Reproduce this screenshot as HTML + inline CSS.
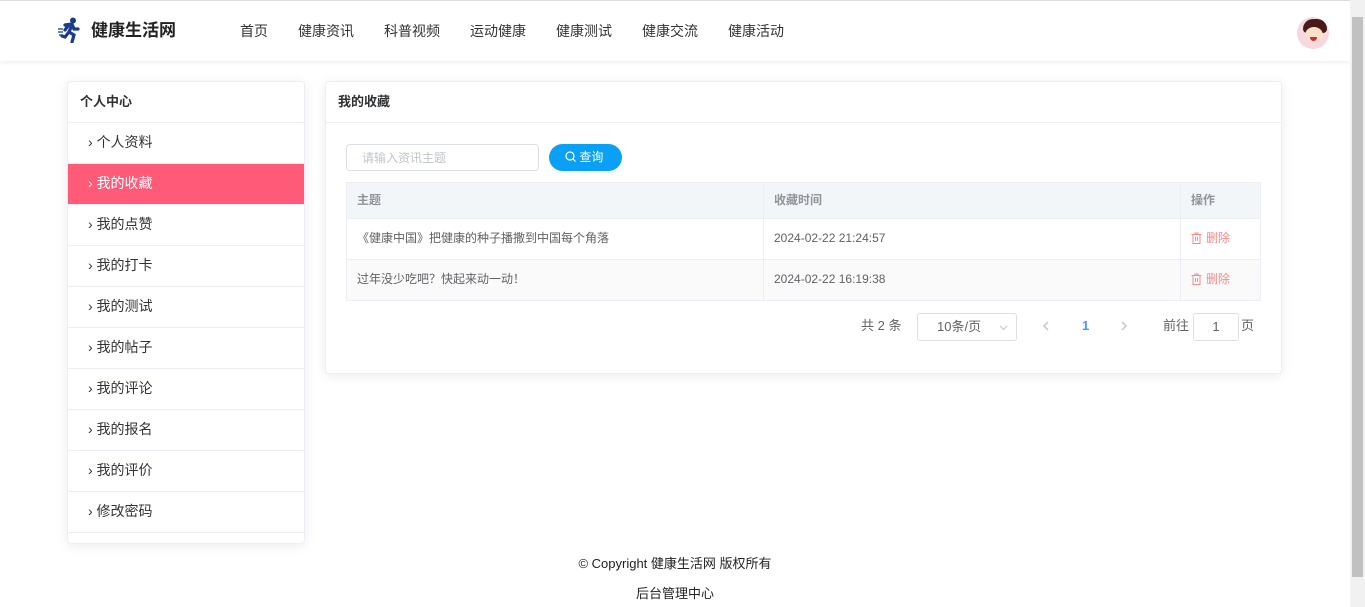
<!DOCTYPE html>
<html><head><meta charset="utf-8"><style>
*{margin:0;padding:0;box-sizing:border-box}
body{width:1365px;height:607px;overflow:hidden;background:#fff;font-family:"Liberation Sans","Noto Sans CJK SC",sans-serif;position:relative;color:#303133}
.hdr{position:absolute;left:0;top:0;width:1350px;height:61px;border-top:1px solid #ddd;box-shadow:0 2px 4px rgba(0,0,0,.06);background:#fff}
.logo{position:absolute;left:58px;top:16px}
.brand{position:absolute;left:91px;top:20px;font-size:17px;line-height:20px;font-weight:bold;color:#222}
.nav{position:absolute;top:21px;font-size:14px;line-height:18px;color:#333}
.av{position:absolute;left:1297px;top:16px;width:32px;height:32px;border-radius:50%;background:#f6d8e0;overflow:hidden}
.sb{position:absolute;left:1350px;top:0;width:15px;height:607px;background:#f1f1f1}
.sb i{position:absolute;left:2px;top:17px;width:11px;height:560px;background:#c1c1c1}
.card{position:absolute;background:#fff;border:1px solid #ebeef5;border-radius:4px;box-shadow:0 2px 12px rgba(0,0,0,.08)}
.ch{height:41px;border-bottom:1px solid #ebeef5;font-size:13px;line-height:18px;font-weight:bold;padding:11px 12px;color:#303133}
.it{height:41px;border-bottom:1px solid #ebeef5;font-size:14px;line-height:18px;padding:10px 20px;color:#333}
.it.a{background:#ff5a78;color:#fff}
td,th{border-bottom:1px solid #ebeef5;border-right:1px solid #ebeef5;font-size:12px;line-height:16px;text-align:left;padding:0 10px;color:#606266}
th{background:#f3f6f9;height:36px;color:#909399;padding-bottom:2px}
td{height:41px;padding-bottom:2px}
table{border-collapse:collapse;position:absolute;left:20px;top:100px;width:915px;border-left:1px solid #ebeef5;border-top:1px solid #ebeef5}
.del{color:#f78989}
.tr{vertical-align:-2px;margin-right:4px}
</style></head><body>
<div class="hdr">
<svg class="logo" width="22" height="26" viewBox="0 0 22 26"><circle cx="15" cy="3.5" r="3" fill="#1a3a8c"/><path d="M7 8 L14 7 L16 12 L20 12 M14 8 L11 15 L16 18 L14 25 M11 15 L7 20 L4 19 M10 9 L7 13" stroke="#1a3a8c" stroke-width="3.2" fill="none" stroke-linecap="round"/><path d="M0 12h5M0 15h5M1 18h4" stroke="#1a3a8c" stroke-width="1.2"/></svg>
<div class="brand">健康生活网</div>
<div class="nav" style="left:240px">首页</div>
<div class="nav" style="left:298px">健康资讯</div>
<div class="nav" style="left:384px">科普视频</div>
<div class="nav" style="left:470px">运动健康</div>
<div class="nav" style="left:556px">健康测试</div>
<div class="nav" style="left:642px">健康交流</div>
<div class="nav" style="left:728px">健康活动</div>
<div class="av"><div style="position:absolute;left:6px;top:2px;width:24px;height:14px;background:#4a1a1a;border-radius:10px 10px 4px 4px"></div><div style="position:absolute;left:8px;top:10px;width:18px;height:16px;background:#fde0c8;border-radius:50%"></div><div style="position:absolute;left:13px;top:20px;width:7px;height:4px;background:#c0304a;border-radius:0 0 4px 4px"></div></div>
</div>
<div class="sb"><i></i></div>

<div class="card" style="left:67px;top:81px;width:238px;height:463px">
<div class="ch">个人中心</div>
<div class="it">› 个人资料</div>
<div class="it a">› 我的收藏</div>
<div class="it">› 我的点赞</div>
<div class="it">› 我的打卡</div>
<div class="it">› 我的测试</div>
<div class="it">› 我的帖子</div>
<div class="it">› 我的评论</div>
<div class="it">› 我的报名</div>
<div class="it">› 我的评价</div>
<div class="it">› 修改密码</div>
</div>

<div class="card" style="left:325px;top:81px;width:957px;height:293px">
<div class="ch">我的收藏</div>
<div style="position:absolute;left:20px;top:62px;width:193px;height:27px;border:1px solid #dcdfe6;border-radius:4px;font-size:12px;line-height:16px;color:#c0c4cc;padding:5px 15px">请输入资讯主题</div>
<div style="position:absolute;left:223px;top:62px;width:73px;height:27px;background:#0aa0f5;border-radius:14px;color:#fff;font-size:12px;line-height:16px;padding:5px 0 0 16px">
<svg width="11" height="11" viewBox="0 0 11 11" style="vertical-align:-1px"><circle cx="5" cy="5" r="4" stroke="#fff" stroke-width="1.2" fill="none"/><path d="M8 8l2.5 2.5" stroke="#fff" stroke-width="1.2"/></svg> 查询</div>
<table>
<tr><th style="width:417px">主题</th><th style="width:417px">收藏时间</th><th>操作</th></tr>
<tr><td>《健康中国》把健康的种子播撒到中国每个角落</td><td>2024-02-22 21:24:57</td><td class="del"><svg class="tr" width="11" height="12" viewBox="0 0 11 12"><path d="M0.5 2.5h10M4 2.5V1h3v1.5M2 2.5v9h7v-9M4.5 5v4M6.5 5v4" stroke="#f78989" fill="none"/></svg>删除</td></tr>
<tr style="background:#fafafa"><td>过年没少吃吧？快起来动一动！</td><td>2024-02-22 16:19:38</td><td class="del"><svg class="tr" width="11" height="12" viewBox="0 0 11 12"><path d="M0.5 2.5h10M4 2.5V1h3v1.5M2 2.5v9h7v-9M4.5 5v4M6.5 5v4" stroke="#f78989" fill="none"/></svg>删除</td></tr>
</table>
<div style="position:absolute;left:535px;top:236px;font-size:13px;line-height:16px;color:#606266">共 2 条</div>
<div style="position:absolute;left:591px;top:231px;width:100px;height:28px;border:1px solid #dcdfe6;border-radius:3px;font-size:13px;line-height:16px;color:#606266;padding:5px 19px">10条/页<svg style="position:absolute;right:8px;top:11px" width="9" height="6" viewBox="0 0 9 6"><path d="M1 1l3.5 3.5L8 1" stroke="#c0c4cc" fill="none"/></svg></div>
<svg style="position:absolute;left:717px;top:239px" width="6" height="10" viewBox="0 0 6 10"><path d="M5 1L1 5l4 4" stroke="#c0c4cc" stroke-width="1.5" fill="none"/></svg>
<div style="position:absolute;left:756px;top:236px;font-size:13px;line-height:16px;color:#409eff;font-weight:bold">1</div>
<svg style="position:absolute;left:795px;top:239px" width="6" height="10" viewBox="0 0 6 10"><path d="M1 1l4 4-4 4" stroke="#c0c4cc" stroke-width="1.5" fill="none"/></svg>
<div style="position:absolute;left:837px;top:236px;font-size:13px;line-height:16px;color:#606266">前往</div>
<div style="position:absolute;left:867px;top:231px;width:46px;height:28px;border:1px solid #dcdfe6;border-radius:3px;font-size:13px;line-height:16px;text-align:center;padding-top:5px;color:#606266">1</div>
<div style="position:absolute;left:915px;top:236px;font-size:13px;line-height:16px;color:#606266">页</div>
</div>

<div style="position:absolute;left:0;width:1350px;top:555px;text-align:center;font-size:13px;line-height:18px;color:#222">© Copyright 健康生活网 版权所有</div>
<div style="position:absolute;left:0;width:1350px;top:585px;text-align:center;font-size:13px;line-height:18px;color:#222">后台管理中心</div>
</body></html>
